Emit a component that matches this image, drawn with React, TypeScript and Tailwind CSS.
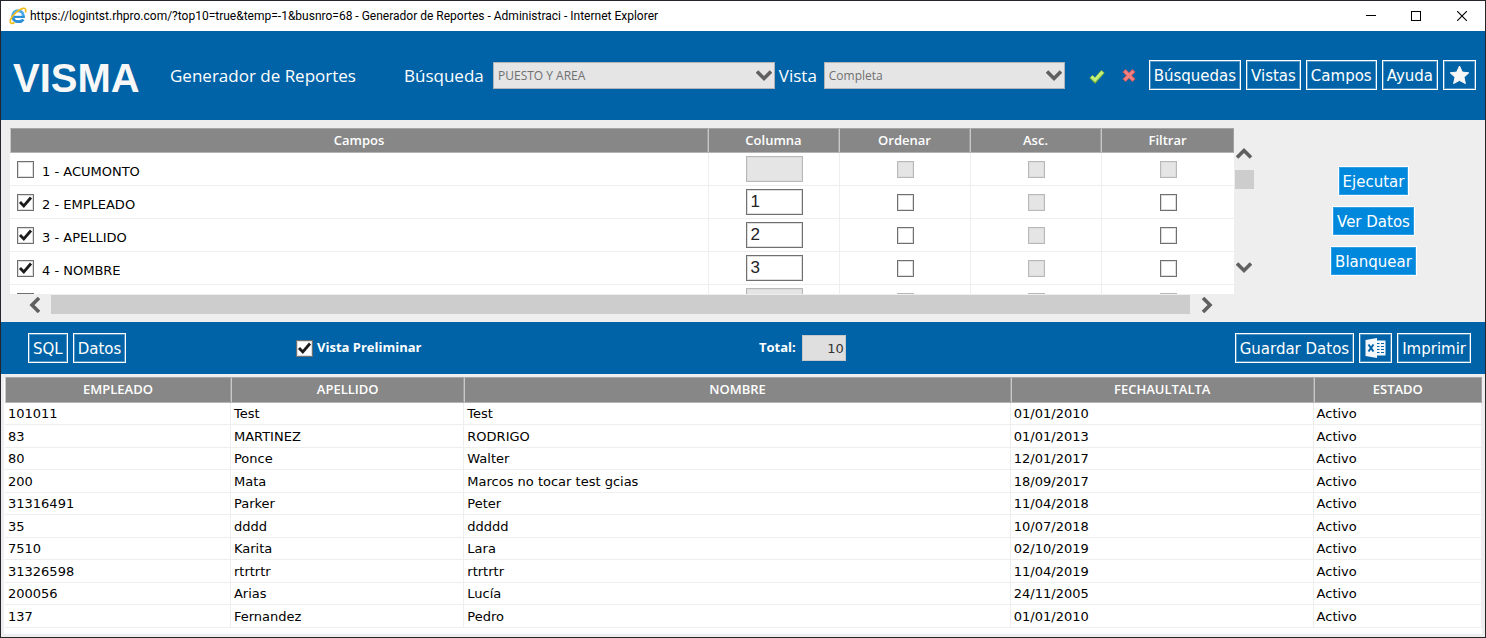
import React from "react";

type Field = {
  id: number;
  name: string;
  checked: boolean;
  column: string;
  enabled: boolean;
};

const fields: Field[] = [
  { id: 1, name: "ACUMONTO", checked: false, column: "", enabled: false },
  { id: 2, name: "EMPLEADO", checked: true, column: "1", enabled: true },
  { id: 3, name: "APELLIDO", checked: true, column: "2", enabled: true },
  { id: 4, name: "NOMBRE", checked: true, column: "3", enabled: true },
  { id: 5, name: "", checked: false, column: "", enabled: false },
];

const resultHeaders = ["EMPLEADO", "APELLIDO", "NOMBRE", "FECHAULTALTA", "ESTADO"];

const results: string[][] = [
  ["101011", "Test", "Test", "01/01/2010", "Activo"],
  ["83", "MARTINEZ", "RODRIGO", "01/01/2013", "Activo"],
  ["80", "Ponce", "Walter", "12/01/2017", "Activo"],
  ["200", "Mata", "Marcos no tocar test gcias", "18/09/2017", "Activo"],
  ["31316491", "Parker", "Peter", "11/04/2018", "Activo"],
  ["35", "dddd", "ddddd", "10/07/2018", "Activo"],
  ["7510", "Karita", "Lara", "02/10/2019", "Activo"],
  ["31326598", "rtrtrtr", "rtrtrtr", "11/04/2019", "Activo"],
  ["200056", "Arias", "Lucía", "24/11/2005", "Activo"],
  ["137", "Fernandez", "Pedro", "01/01/2010", "Activo"],
];

const verdana = "font-['Verdana','DejaVu_Sans',sans-serif]";

function Check({
  id,
  label,
  checked = false,
  disabled = false,
}: {
  id: string;
  label?: string;
  checked?: boolean;
  disabled?: boolean;
}) {
  return (
    <span className="relative inline-flex size-[17px] shrink-0">
      <input
        id={id}
        type="checkbox"
        aria-label={label}
        defaultChecked={checked}
        disabled={disabled}
        className="peer size-[17px] appearance-none border border-[#707070] bg-white inset-ring inset-ring-[#ddd] disabled:border-[#b8b8b8] disabled:bg-[#e5e5e5]"
      />
      <svg
        viewBox="0 0 17 17"
        aria-hidden="true"
        className="pointer-events-none absolute inset-0 hidden size-[17px] peer-checked:block"
      >
        <path d="M3 8 L6.8 12 L14 3.5" fill="none" stroke="#1c1c1c" strokeWidth="2.8" />
      </svg>
    </span>
  );
}

function Chevron({ d, className }: { d: string; className: string }) {
  return (
    <svg viewBox="0 0 16 16" aria-hidden="true" className={className}>
      <path d={d} fill="none" stroke="#606060" strokeWidth="3.6" />
    </svg>
  );
}

const down = "M1 4.5 L8 11.5 L15 4.5";
const up = "M1 11.5 L8 4.5 L15 11.5";
const left = "M12 1 L5 8 L12 15";
const right = "M4 1 L11 8 L4 15";

function Picker({ id, value, className }: { id: string; value: string; className: string }) {
  return (
    <div className={"relative " + className}>
      <select
        id={id}
        disabled
        defaultValue={value}
        className="h-[27px] w-full appearance-none border border-[#b4b4b4] bg-[#e5e5e5] pl-1 font-['Open_Sans',sans-serif] text-[12px] text-[#707070] opacity-100"
      >
        <option>{value}</option>
      </select>
      <Chevron d={down} className="pointer-events-none absolute top-[5px] right-[3px] size-4" />
    </div>
  );
}

function BarButton({ children, label }: { children: React.ReactNode; label?: string }) {
  return (
    <button
      type="button"
      aria-label={label}
      className={
        "flex h-[30px] items-center border border-white px-1 pt-0.5 text-[15px] whitespace-nowrap text-white inset-ring inset-ring-white/30 " +
        verdana
      }
    >
      {children}
    </button>
  );
}

function ActionButton({ children }: { children: React.ReactNode }) {
  return (
    <button
      type="button"
      className={
        "flex h-[30px] items-center border border-white bg-[#0088dd] px-1 pt-0.5 text-[15px] whitespace-nowrap text-white inset-ring inset-ring-[#2f9fe4] " +
        verdana
      }
    >
      {children}
    </button>
  );
}

function BrowserIcon() {
  return (
    <svg viewBox="0 0 18 18" aria-hidden="true" className="size-[18px]">
      <circle cx="9" cy="9.2" r="5.4" fill="none" stroke="#4aa9e6" strokeWidth="3" />
      <path d="M10 11 H17 V13 H13.4 Z" fill="#fff" />
      <path d="M4.6 9.9 H15.6" fill="none" stroke="#2b8fd6" strokeWidth="2.2" />
      <path d="M4 11 C5.4 15.6 11.6 16 14.6 12.6" fill="none" stroke="#2b8fd6" strokeWidth="2.4" />
      <path
        d="M16.4 5.6 C17.4 2.4 16.4 0.8 14 1.4 C9.6 2.4 3.4 8 1.6 12.6 C0.4 16 2.2 17.4 5.6 15.6"
        fill="none"
        stroke="#f3bd1c"
        strokeWidth="1.7"
      />
    </svg>
  );
}

function TitleBar() {
  return (
    <div className="flex h-[30px] items-center bg-white pl-2">
      <BrowserIcon />
      <h1 className="ml-[3px] min-w-0 flex-1 truncate font-['Roboto',sans-serif] text-[12px] text-black">
        https://logintst.rhpro.com/?top10=true&amp;temp=-1&amp;busnro=68 - Generador de Reportes -
        Administraci - Internet Explorer
      </h1>
      <button type="button" aria-label="Minimizar" className="flex h-full w-[45px] items-center justify-center">
        <svg viewBox="0 0 10 10" className="size-[10px]">
          <path d="M0 4.5 H10" stroke="#000" />
        </svg>
      </button>
      <button type="button" aria-label="Maximizar" className="flex h-full w-[45px] items-center justify-center">
        <svg viewBox="0 0 10 10" className="size-[10px]">
          <rect x="0.5" y="0.5" width="9" height="9" fill="none" stroke="#000" />
        </svg>
      </button>
      <button type="button" aria-label="Cerrar" className="flex h-full w-[47px] items-center justify-center">
        <svg viewBox="0 0 10 10" className="size-[10px]">
          <path d="M0 0 L10 10 M10 0 L0 10" stroke="#000" strokeWidth="1.1" />
        </svg>
      </button>
    </div>
  );
}

function Header() {
  return (
    <header className="flex h-[89px] items-center bg-[#0063a7] pr-[9px] pl-3 text-white">
      <div className="w-[157px] shrink-0 pt-1 font-['Liberation_Sans',sans-serif] text-[40px] leading-none font-bold text-[#f7f7f7]">
        VISMA
      </div>
      <h2 className="w-[234px] shrink-0 font-['Open_Sans',sans-serif] text-[17px] whitespace-nowrap">
        Generador de Reportes
      </h2>
      <label htmlFor="busqueda" className="w-[89px] shrink-0 font-['Open_Sans',sans-serif] text-[17px]">
        Búsqueda
      </label>
      <Picker id="busqueda" value="PUESTO Y AREA" className="min-w-0 flex-[282]" />
      <label htmlFor="vista" className="ml-1 w-[45px] shrink-0 font-['Open_Sans',sans-serif] text-[17px]">
        Vista
      </label>
      <Picker id="vista" value="Completa" className="min-w-0 flex-[241]" />
      <div className="mr-3 ml-6 flex shrink-0 gap-4">
        <button type="button" aria-label="Aceptar">
          <svg viewBox="0 0 16 16" className="size-4">
            <path d="M2 8.5 L6 12.5 L14 3.5" fill="none" stroke="#7fb53a" strokeWidth="4.4" />
            <path d="M2.4 8.5 L6 11.9 L13.6 3.7" fill="none" stroke="#c3f07a" strokeWidth="3" />
          </svg>
        </button>
        <button type="button" aria-label="Cancelar">
          <svg viewBox="0 0 16 16" className="size-4">
            <path d="M3 2.5 L13 12.5 M13 2.5 L3 12.5" fill="none" stroke="#c9585c" strokeWidth="4.4" />
            <path d="M3.6 3.1 L12.4 11.9 M12.4 3.1 L3.6 11.9" fill="none" stroke="#f28080" strokeWidth="2.8" />
          </svg>
        </button>
      </div>
      <nav className="flex shrink-0 gap-[5px] pb-px">
        <BarButton>Búsquedas</BarButton>
        <BarButton>Vistas</BarButton>
        <BarButton>Campos</BarButton>
        <BarButton>Ayuda</BarButton>
        <BarButton label="Favoritos">
          <svg viewBox="0 0 23 20" className="h-5 w-[23px]">
            <path
              d="M11.5 0 L14.3 6.1 L20.8 6.8 L16 11.2 L17.4 17.6 L11.5 14.4 L5.6 17.6 L7 11.2 L2.2 6.8 L8.7 6.1 Z"
              fill="#f6f6f6"
              stroke="#f6f6f6"
              strokeLinejoin="round"
            />
          </svg>
        </BarButton>
      </nav>
    </header>
  );
}

function FieldTable() {
  const head =
    "h-[25px] border border-l-[#c8c8c8] border-t-[#a6a6a6] border-r-[#a0a0a0] border-b-[#b4b4b4] bg-[#878787] p-0 font-['Open_Sans',sans-serif] text-[13px] font-semibold text-white";
  const cell = "h-[33px] border-b border-l border-[#eee] p-0 text-center align-middle";
  return (
    <div className="h-[166px] overflow-hidden bg-white">
      <table className="w-full table-fixed border-separate border-spacing-0">
        <thead>
          <tr>
            <th className={head}>Campos</th>
            <th className={head + " w-[131px]"}>Columna</th>
            <th className={head + " w-[131px]"}>Ordenar</th>
            <th className={head + " w-[131px]"}>Asc.</th>
            <th className={head + " w-[133px]"}>Filtrar</th>
          </tr>
        </thead>
        <tbody>
          {fields.map((f) => (
            <tr key={f.id}>
              <td className="h-[33px] border-b border-[#eee] p-0 pl-[7px] align-middle">
                <div className="flex items-center gap-2">
                  <Check id={"campo-" + f.id} checked={f.checked} label={f.name ? undefined : "Campo"} />
                  {f.name && (
                    <label htmlFor={"campo-" + f.id} className={"pt-1.5 text-[13px] leading-4 text-black " + verdana}>
                      {f.id} - {f.name}
                    </label>
                  )}
                </div>
              </td>
              <td className={cell}>
                <input
                  type="text"
                  aria-label="Columna"
                  defaultValue={f.column}
                  disabled={!f.enabled}
                  className="mx-auto block h-[26px] w-[57px] border border-[#707070] bg-white px-1 font-['Liberation_Sans',sans-serif] text-[17px] text-[#222] inset-ring inset-ring-[#ddd] disabled:border-[#b8b8b8] disabled:bg-[#e5e5e5]"
                />
              </td>
              <td className={cell}>
                <div className="flex justify-center">
                  <Check id={"ordenar-" + f.id} label="Ordenar" disabled={!f.enabled} />
                </div>
              </td>
              <td className={cell}>
                <div className="flex justify-center">
                  <Check id={"asc-" + f.id} label="Asc." disabled />
                </div>
              </td>
              <td className={cell}>
                <div className="flex justify-center">
                  <Check id={"filtrar-" + f.id} label="Filtrar" disabled={!f.enabled} />
                </div>
              </td>
            </tr>
          ))}
        </tbody>
      </table>
    </div>
  );
}

function FieldSection() {
  return (
    <section className="flex bg-[#eee] pt-2 pb-2 pl-[9px]">
      <div className="min-w-0 flex-1">
        <FieldTable />
        <div className="mt-px flex h-[19px] items-center">
          <Chevron d={left} className="mr-2 ml-[17px] size-4 shrink-0" />
          <div className="h-full flex-1 bg-[#cdcdcd]" />
          <Chevron d={right} className="mr-[19px] ml-[9px] size-4 shrink-0" />
        </div>
      </div>
      <div className="flex w-5 flex-col items-center pt-[18px]">
        <Chevron d={up} className="size-4" />
        <div className="mt-2 size-[19px] bg-[#cdcdcd]" />
        <Chevron d={down} className="mt-[70px] size-4" />
      </div>
      <div className="ml-2 flex w-[223px] flex-col items-center gap-[10px] pt-[38px]">
        <ActionButton>Ejecutar</ActionButton>
        <ActionButton>Ver Datos</ActionButton>
        <ActionButton>Blanquear</ActionButton>
      </div>
    </section>
  );
}

function Toolbar() {
  return (
    <div className="flex h-[52px] items-center bg-[#0063a7] pr-[14px] pl-[27px] text-white">
      <div className="flex w-[268px] gap-[5px]">
        <BarButton>SQL</BarButton>
        <BarButton>Datos</BarButton>
      </div>
      <div className="flex w-[463px] items-center gap-1">
        <Check id="preliminar" checked />
        <label htmlFor="preliminar" className="font-['Open_Sans',sans-serif] text-[13px] font-bold">
          Vista Preliminar
        </label>
      </div>
      <div className="flex items-center gap-[6px]">
        <label htmlFor="total" className="font-['Open_Sans',sans-serif] text-[13px] font-bold">
          Total:
        </label>
        <input
          id="total"
          type="text"
          readOnly
          defaultValue="10"
          className={
            "h-[26px] w-11 border border-[#c8c8c8] bg-[#dfdfdf] px-px text-right text-[13px] text-[#333] " + verdana
          }
        />
      </div>
      <div className="ml-auto flex gap-[5px]">
        <BarButton>Guardar Datos</BarButton>
        <BarButton label="Exportar a Excel">
          <svg viewBox="0 0 23 22" className="h-[22px] w-[23px]">
            <path d="M12 2.5 H21.5 V17.5 H12 Z" fill="#f4f8fb" />
            <path
              d="M13 5.5 H15.5 M13 8.5 H15.5 M13 11.5 H15.5 M13 14.5 H15.5 M17 5.5 H20 M17 8.5 H20 M17 11.5 H20 M17 14.5 H20"
              stroke="#0063a7"
            />
            <path d="M1.5 2 L13 0 V20 L1.5 18 Z" fill="#f4f8fb" />
            <path d="M4.5 6.5 L9.5 13.5 M9.5 6.5 L4.5 13.5" stroke="#0063a7" strokeWidth="2" />
          </svg>
        </BarButton>
        <BarButton>Imprimir</BarButton>
      </div>
    </div>
  );
}

function ResultTable() {
  return (
    <section className="flex flex-1 flex-col bg-[#eee] p-[3px]">
      <div className="flex-1 bg-white pl-px">
        <table className="w-full table-fixed border-separate border-spacing-0">
          <colgroup>
            <col className="w-[15.3%]" />
            <col className="w-[15.8%]" />
            <col className="w-[37%]" />
            <col className="w-[20.5%]" />
            <col className="w-[11.4%]" />
          </colgroup>
          <thead>
            <tr>
              {resultHeaders.map((h) => (
                <th
                  key={h}
                  className="h-[26px] border border-t-[#a6a6a6] border-r-[#a0a0a0] border-b-[#b4b4b4] border-l-[#c8c8c8] bg-[#878787] p-0 font-['Open_Sans',sans-serif] text-[13px] font-semibold text-white"
                >
                  {h}
                </th>
              ))}
            </tr>
          </thead>
          <tbody>
            {results.map((row) => (
              <tr key={row[0]} className="h-[22px] even:h-[23px]">
                {row.map((v, i) => (
                  <td
                    key={i}
                    className={
                      "border-r border-b border-[#eee] p-0 pt-px pl-[3px] text-[13px] leading-4 text-black " + verdana
                    }
                  >
                    {v}
                  </td>
                ))}
              </tr>
            ))}
          </tbody>
        </table>
      </div>
    </section>
  );
}

export default function App() {
  return (
    <main className="flex min-h-screen w-full flex-col border border-[#25252b] bg-white">
      <TitleBar />
      <Header />
      <FieldSection />
      <Toolbar />
      <ResultTable />
    </main>
  );
}
